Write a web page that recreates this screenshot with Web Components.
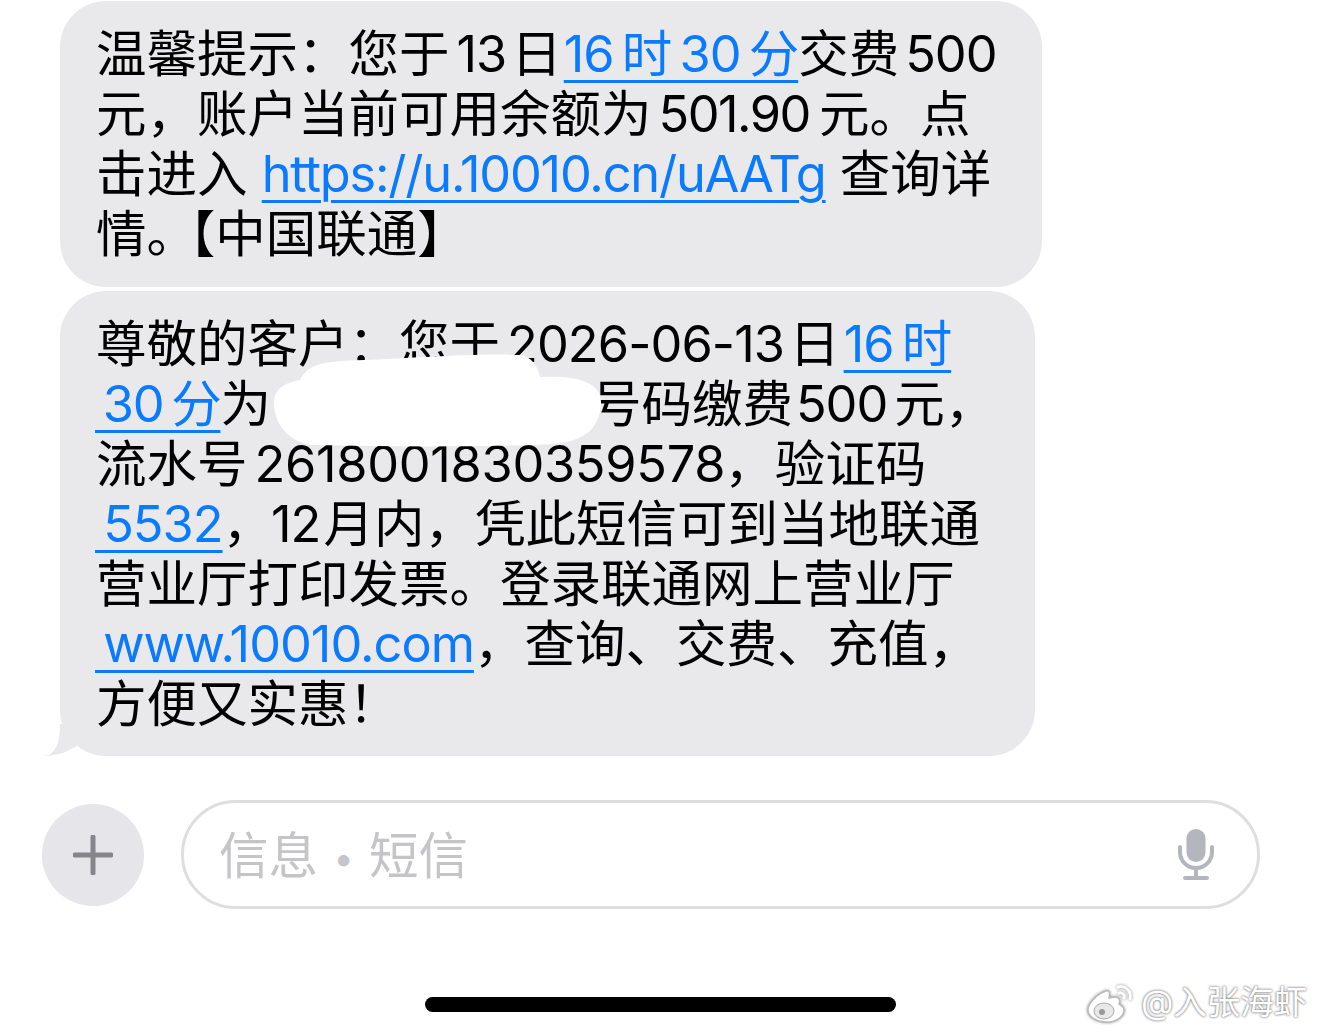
<!DOCTYPE html>
<html lang="zh">
<head>
<meta charset="utf-8">
<title>短信</title>
<style>
    html, body { margin: 0; background: #fff; }
    body { width: 1320px; height: 1035px; overflow: hidden; font-family: "Inter", "Noto Sans CJK SC", sans-serif; }
</style>
</head>
<body>
<sms-screen>
    <sms-bubble style="--w:982px;--pb:23px">温馨提示：您于<sms-num>13</sms-num>日<sms-link style="margin-left:2px">16&#8201;时&#8201;30&#8201;分</sms-link>交费<sms-num style="--ml:6px">500</sms-num><br>元，账户当前可用余额为<sms-num style="--ls:-1.5px;--mr:9px">501.90</sms-num>元。点<br>击进入 <sms-link style="letter-spacing:-1.2px">https://u.10010.cn/uAATg</sms-link> 查询详<br>情。<span style="margin-left:-7px">【中国联通】</span></sms-bubble>
    <sms-bubble style="--w:975px;--pb:22px" tail>尊敬的客户：您于<sms-num style="--ls:-.9px">2026-06-13</sms-num>日<sms-link style="margin-left:4px">16&#8201;时</sms-link><br><sms-link pad style="letter-spacing:-1.3px">&#8201;30&#8201;分</sms-link>为<sms-redact></sms-redact>号码缴费<sms-num style="--ml:3px;--mr:7px">500</sms-num>元，<br>流水号<sms-num style="--ls:-.3px;--mr:-1px">2618001830359578</sms-num>，验证码<br><sms-link pad>&#8201;5532</sms-link>，<sms-num style="--ml:-2px;--mr:3px">12</sms-num>月内，凭此短信可到当地联通<br>营业厅打印发票。登录联通网上营业厅<br><sms-link pad>&#8201;www.10010.com</sms-link>，查询、交费、充值，<br>方便又实惠！</sms-bubble>
    <sms-composer></sms-composer>
    <home-bar></home-bar>
    <weibo-mark></weibo-mark>
</sms-screen>

<script>
class SmsScreen extends HTMLElement {
    constructor() {
        super();
        this.attachShadow({mode: 'open'}).innerHTML = `
        <style>
            :host { display: block; position: relative; width: 1320px; height: 1035px; }
            .thread { display: flex; flex-direction: column; align-items: flex-start; gap: 4px; padding: 1px 0 0 60px; }
        </style>
        <div class="thread"><slot></slot></div>
        <slot name="rest"></slot>
        `
    }
}

class SmsBubble extends HTMLElement {
    constructor() {
        super();
        this.attachShadow({mode: 'open'}).innerHTML = `
        <style>
            :host {
                display: block;
                position: relative;
                box-sizing: border-box;
                width: var(--w);
                padding: 23px 0 var(--pb) 36px;
                border-radius: 46px;
                background: #e9e9eb;
                color: #000;
                font-size: 50.5px;
                line-height: 60px;
                white-space: nowrap;
            }
            svg { position: absolute; left: -17px; bottom: 0; display: none; }
            :host([tail]) svg { display: block; }
        </style><slot></slot><svg width="40" height="32" viewBox="0 0 40 32"><path d="M0 32C10 31.500 17 24 17 0H37V20H36C28 27 15 32 0 32Z" fill="#e9e9eb"/></svg>`
    }
}

// inline bits: no whitespace around the slot, it would render as a gap
class SmsNum extends HTMLElement {
    constructor() {
        super();
        this.attachShadow({mode: 'open'}).innerHTML = `<style>:host { display: inline; margin: 0 var(--mr, 5px) 0 var(--ml, 7px); letter-spacing: var(--ls, -1px); }</style><slot></slot>`
    }
}

class SmsLink extends HTMLElement {
    constructor() {
        super();
        this.attachShadow({mode: 'open'}).innerHTML = `<style>
            :host {
                display: inline;
                color: #0a7aff;
                letter-spacing: -1px;
                text-decoration: underline 3px;
                text-underline-offset: 8px;
            }
            :host([pad]) { margin-left: -1px; }
        </style><slot></slot>`
    }
}

// the white smear hiding the phone number
class SmsRedact extends HTMLElement {
    constructor() {
        super();
        this.attachShadow({mode: 'open'}).innerHTML = `<style>
            :host { display: inline-block; width: 320px; height: 1px; position: relative; }
            svg { position: absolute; left: 2px; top: -68px; }
        </style><svg width="330" height="94" viewBox="0 0 328 94"><path d="M0 50C0 36 10 30 26 27C34 10 52 8 90 7C130 6 200 0 245 2C258 3 264 14 266 24C300 22 328 28 327 50C326 74 312 88 280 91C220 94 130 94 40 92C14 90 0 70 0 50Z" fill="#fff"/></svg>`
    }
}

class SmsComposer extends HTMLElement {
    constructor() {
        super();
        this.attachShadow({mode: 'open'}).innerHTML = `
        <style>
            :host { display: flex; align-items: center; gap: 37px; padding: 44px 0 0 42px; }
            .plus { width: 102px; height: 102px; margin-top: 1px; border-radius: 50%; background: #e5e5ea; display: flex; align-items: center; justify-content: center; flex: none; }
            .field {
                box-sizing: border-box;
                width: 1079px;
                height: 109px;
                border: 3px solid #dedee0;
                border-radius: 55px;
                padding: 0 43px 0 35px;
                display: flex;
                align-items: center;
                justify-content: space-between;
                color: #c5c5c8;
                font-size: 49.5px;
            }
            .hint { margin-top: -4px; }
            .dot { display: inline-block; width: 51px; text-align: center; font-size: 36px; vertical-align: 3px; }
        </style>
        <div class="plus">
            <svg width="40" height="40" viewBox="0 0 40 40"><path d="M20 2V38M2 20H38" stroke="#85858b" stroke-width="5" stroke-linecap="round"/></svg>
        </div>
        <div class="field">
            <span class="hint">信息<span class="dot">•</span>短信</span>
            <svg width="36" height="52" viewBox="0 0 36 52">
                <rect x="8.500" y="0" width="19" height="33" rx="9.500" fill="#b4b6be"/>
                <path d="M2 18V23C2 32 9 39 18 39C27 39 34 32 34 23V18M18 39V49M7 49H29" fill="none" stroke="#b4b6be" stroke-width="4" stroke-linecap="round"/>
            </svg>
        </div>
        `
    }
}

class HomeBar extends HTMLElement {
    constructor() {
        super();
        this.attachShadow({mode: 'open'}).innerHTML = `
        <style>
            :host { display: block; width: 471px; height: 15px; margin: 88px 0 0 425px; border-radius: 8px; background: #000; }
        </style>
        `
    }
}

class WeiboMark extends HTMLElement {
    constructor() {
        super();
        this.attachShadow({mode: 'open'}).innerHTML = `
        <style>
            :host {
                position: absolute;
                left: 1086px;
                top: 980px;
                display: flex;
                align-items: center;
                gap: 5px;
                color: #fff;
                font-size: 33.500px;
                line-height: 44px;
                white-space: nowrap;
                text-shadow: 0 0 2px #777, 0 0 3px #999;
            }
            svg { filter: drop-shadow(0 0 1.500px #888); }
        </style>
        <svg width="50" height="42" viewBox="0 0 50 42">
            <path d="M20 10C11 13 2 22 2 29C2 36 11 41 21 41C31 41 38 35 38 29C38 25 34 24 33 23C35 19 33 16 29 16C26 16 24 17 23 17C24 13 24 9 20 10Z" fill="#fff" stroke="#bbb" stroke-width="1.500"/>
            <ellipse cx="18" cy="30" rx="10" ry="8" fill="#e8e8e8" stroke="#aaa"/>
            <circle cx="16" cy="31" r="3" fill="#999"/>
            <path d="M32 6C39 4 46 10 44 18M33 12C36 11 39 14 38 17" fill="none" stroke="#fff" stroke-width="3" stroke-linecap="round"/>
        </svg>
        <span>@入张海虾</span>
        `
    }
}

customElements.define('sms-screen', SmsScreen)
customElements.define('sms-bubble', SmsBubble)
customElements.define('sms-num', SmsNum)
customElements.define('sms-link', SmsLink)
customElements.define('sms-redact', SmsRedact)
customElements.define('sms-composer', SmsComposer)
customElements.define('home-bar', HomeBar)
customElements.define('weibo-mark', WeiboMark)

document.querySelectorAll('sms-composer, home-bar, weibo-mark').forEach(el => el.slot = 'rest')
</script>
</body>
</html>
